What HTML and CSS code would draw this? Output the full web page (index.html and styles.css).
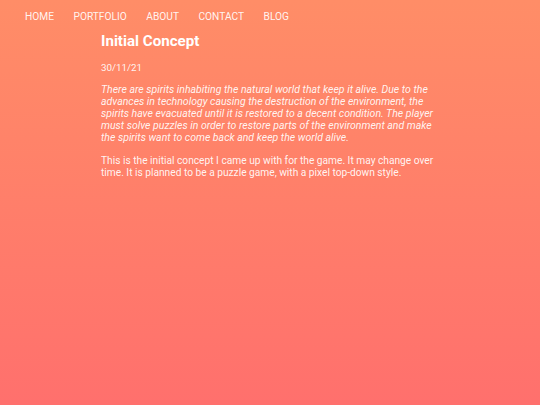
FILE: index.html
```html
<!DOCTYPE html>
<html>
<head>
<meta charset="utf-8">
<link rel="stylesheet" href="styles.css">
</head>
<body>
<nav class="nav">
  <a href="#">HOME</a>
  <a href="#">PORTFOLIO</a>
  <a href="#">ABOUT</a>
  <a href="#">CONTACT</a>
  <a href="#">BLOG</a>
</nav>
<main class="post">
  <h1 class="title">Initial Concept</h1>
  <p class="date">30/11/21</p>
  <p class="intro">There are spirits inhabiting the natural world that keep it alive. Due to the advances in technology causing the destruction of the environment, the spirits have evacuated until it is restored to a decent condition. The player must solve puzzles in order to restore parts of the environment and make the spirits want to come back and keep the world alive.</p>
  <p class="body">This is the initial concept I came up with for the game. It may change over time. It is planned to be a puzzle game, with a pixel top-down style.</p>
</main>
</body>
</html>
```
FILE: styles.css
```css
html, body {
  margin: 0;
  padding: 0;
  height: 100%;
}
body {
  background: linear-gradient(to bottom, #ff8d67, #ff706d);
  font-family: Roboto, "Liberation Sans", sans-serif;
  color: rgba(255, 255, 255, 0.92);
  font-size: 10.2px;
}
.nav {
  display: flex;
  gap: 19.5px;
  padding: 10px 25px 0;
  height: 13px;
  line-height: 13px;
}
.nav a {
  color: rgba(255, 255, 255, 0.92);
  text-decoration: none;
  font-size: 10.2px;
}
.post {
  width: 338px;
  margin-left: 101px;
}
.title {
  margin: 8px 0 0;
  font-size: 15.1px;
  font-weight: bold;
  line-height: 20px;
  color: #fff;
}
.date {
  margin: 11px 0 0;
  font-size: 9.8px;
  line-height: 12px;
}
.intro {
  margin: 10px 0 0;
  font-size: 10.5px;
  font-style: italic;
  line-height: 12px;
}
.body {
  margin: 11px 0 0;
  line-height: 12px;
}
```
